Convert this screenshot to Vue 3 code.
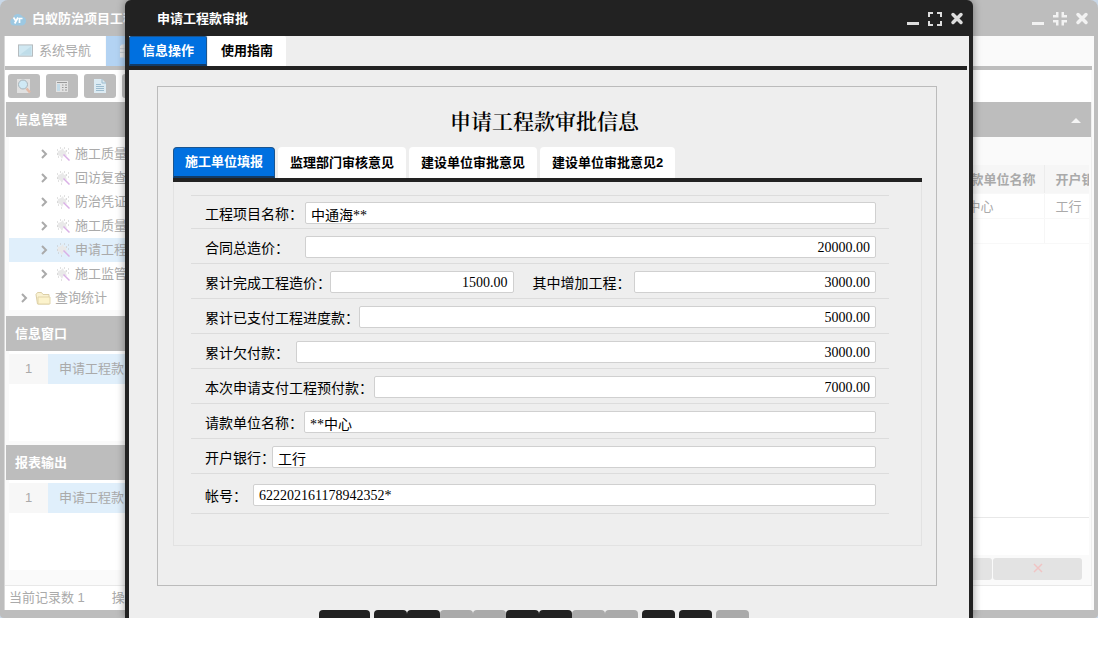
<script setup>
import { reactive } from 'vue'

const treeItems = [
  { text: '施工质量' },
  { text: '回访复查' },
  { text: '防治凭证' },
  { text: '施工质量' },
  { text: '申请工程', active: true },
  { text: '施工监管' }
]

const sidePanels = ['信息窗口', '报表输出']

const formTabs = ['施工单位填报', '监理部门审核意见', '建设单位审批意见', '建设单位审批意见2']

const rows = reactive([
  { h: 33, fields: [{ id: 'project', label: '工程项目名称：', lw: 100, value: '中通海**', grow: 1 }] },
  { h: 35, fields: [{ id: 'total', label: '合同总造价：', lw: 100, value: '20000.00', num: true, grow: 1 }] },
  {
    h: 35,
    fields: [
      { id: 'done', label: '累计完成工程造价：', lw: 125, value: '1500.00', num: true, grow: 184 },
      { id: 'added', label: '其中增加工程：', lw: 101, value: '3000.00', num: true, grow: 243 }
    ]
  },
  { h: 35, fields: [{ id: 'paid', label: '累计已支付工程进度款：', lw: 154, value: '5000.00', num: true, grow: 1 }] },
  { h: 35, fields: [{ id: 'owed', label: '累计欠付款：', lw: 91, value: '3000.00', num: true, grow: 1 }] },
  { h: 35, fields: [{ id: 'advance', label: '本次申请支付工程预付款：', lw: 169, value: '7000.00', num: true, grow: 1 }] },
  { h: 35, fields: [{ id: 'payee', label: '请款单位名称：', lw: 99, value: '**中心', grow: 1 }] },
  { h: 35, fields: [{ id: 'bank', label: '开户银行：', lw: 67, value: '工行', grow: 1 }] },
  { h: 41, fields: [{ id: 'account', label: '帐号：', lw: 48, value: '622202161178942352*', grow: 1 }] }
])

const footerGroups = [
  [{ name: '保存', wide: true }],
  [
    { name: '首条' }, { name: '上条' }, { name: '下条', off: true }, { name: '末条', off: true },
    { name: '新增' }, { name: '修改' }, { name: '删除', off: true }, { name: '撤销', off: true }
  ],
  [{ name: '打印' }],
  [{ name: '导出' }],
  [{ name: '关闭', off: true }]
]
</script>

<template>
  <div class="desktop" lang="zh-CN">
    <div class="window">
      <header class="titlebar">
        <svg class="logo" viewBox="0 0 16 14" aria-hidden="true">
          <path d="M4 13.500a3.700 3.700 0 0 1-.8-7.300A5 5 0 0 1 12.500 4.500a4.600 4.600 0 0 1-.3 9z" fill="#9cc8e2" />
          <path d="M3.500 5.500l2.200 3.300M8 5.500l-3.300 6M9.500 11V6.500h3" fill="none" stroke="#fff" stroke-width="1.700" />
        </svg>
        <span class="wtitle">白蚁防治项目工程</span>
        <div class="controls">
          <button type="button" aria-label="最小化"><svg viewBox="0 0 16 16"><path d="M2 11h12v3H2z" /></svg></button>
          <button type="button" aria-label="还原"><svg viewBox="0 0 16 16"><path d="M4 1h2.500v5.500H1V4h3zM9.500 1H12v3h3v2.500H9.500zM1 9h5.500v5.500H4v-3H1zM9.500 9H15v2.500h-3v3H9.500z" /></svg></button>
          <button type="button" aria-label="关闭"><svg viewBox="0 0 16 16"><path class="cross" d="M4 3.500l8 8M12 3.500l-8 8" /></svg></button>
        </div>
      </header>

      <div class="wbody">
        <nav class="wtabs">
          <button type="button" class="wtab">
            <svg class="screen" viewBox="0 0 16 14" aria-hidden="true">
              <rect x="0.500" y="0.500" width="15" height="12" fill="#d0e8f2" stroke="#b3b8bb" />
              <path d="M2 11L14 2v9z" fill="#bfdde9" />
            </svg>
            系统导航
          </button>
          <button type="button" class="wtab current" aria-label="申请工程款">
            <svg class="screen" viewBox="0 0 16 14" aria-hidden="true">
              <path d="M3 0h13v14H1V2z" fill="#e6e8ea" />
              <path d="M1 4.500h15M1 8.500h15M5.500 0v14M10.500 0v14" stroke="#c0c8ce" />
            </svg>
          </button>
        </nav>

        <div class="toolbar">
          <button type="button" aria-label="查询">
            <svg viewBox="0 0 16 16">
              <path d="M1 1h13v14H1z" fill="#e0e0e0" />
              <circle cx="7" cy="6.500" r="4.500" fill="#cfe9f5" stroke="#a9b4ba" />
              <path d="M10.500 10.500l3.500 4" stroke="#e2b9a6" stroke-width="2.500" />
            </svg>
          </button>
          <button type="button" aria-label="表单">
            <svg viewBox="0 0 16 16">
              <path d="M2 3h12v11H2z" fill="#e2e2e2" />
              <path d="M3 6h3v7H3z" fill="#c3dbe8" />
              <path d="M8 7h1.500M8 9.500h1.500M8 12h1.500M11 7h2M11 9.500h2M11 12h2M3 4.500h10" stroke="#999" />
            </svg>
          </button>
          <button type="button" aria-label="文档">
            <svg viewBox="0 0 16 16">
              <path d="M2 1h8l4 4v10H2z" fill="#dcebf3" />
              <path d="M10 1v4h4M4 6.500h5M4 8.500h8M4 10.500h8M4 12.500h8" fill="none" stroke="#9cbccf" />
            </svg>
          </button>
          <button type="button" aria-label="导出"></button>
        </div>

        <div class="columns">
          <aside class="side">
            <h2 class="bar">信息管理</h2>
            <ul class="tree">
              <li v-for="(item, i) in treeItems" :key="i" :class="{ active: item.active }">
                <svg class="chev" viewBox="0 0 8 10" aria-hidden="true"><path d="M2 1l4 4-4 4" /></svg>
                <svg class="wand" viewBox="0 0 14 14" aria-hidden="true">
                  <path d="M2 4l3-1 2-2 1 3 3-1-1 3 1 3-3-1-2 4-2-3-3-1z" fill="#e9e9e9" />
                  <path d="M1 3h1M4 1h1M12 2h1M1 7h1M2 10h1M5 13h1M8 1h1M10 4h1M12 6h1" stroke="#c4c4c4" />
                  <path d="M7.500 7.500l6 6" stroke="#d9b0e6" stroke-width="1.500" />
                </svg>
                <span>{{ item.text }}</span>
              </li>
              <li class="parent">
                <svg class="chev" viewBox="0 0 8 10" aria-hidden="true"><path d="M2 1l4 4-4 4" /></svg>
                <svg class="folder" viewBox="0 0 16 14" aria-hidden="true">
                  <path d="M1 3.500l1.500-2h4l1.500 2h6v9.500H2.500z" fill="#faf2d2" stroke="#dccfa6" />
                  <path d="M3 6h12v7H3z" fill="#fcf3cc" stroke="#e2d5aa" />
                </svg>
                <span>查询统计</span>
              </li>
            </ul>
            <section v-for="p in sidePanels" :key="p" class="panel">
              <h2 class="bar">{{ p }}</h2>
              <div class="list">
                <div class="listrow"><span class="no">1</span><span class="item">申请工程款</span></div>
              </div>
            </section>
          </aside>

          <main class="main">
            <div class="bar fold">
              <svg viewBox="0 0 12 6" aria-hidden="true"><path d="M1 6l5-5 5 5z" fill="#f4f4f4" /></svg>
            </div>
            <div class="grid">
              <table>
                <colgroup><col><col class="c-unit"><col class="c-bank"></colgroup>
                <thead><tr><th></th><th>请款单位名称</th><th>开户银行</th></tr></thead>
                <tbody>
                  <tr><td></td><td>**中心</td><td>工行</td></tr>
                  <tr><td></td><td></td><td></td></tr>
                </tbody>
              </table>
            </div>
            <div class="actions">
              <button type="button" aria-label="确定"></button>
              <button type="button" aria-label="取消">
                <svg viewBox="0 0 10 10"><path d="M1 1l8 8M9 1l-8 8" stroke="#f0c4c4" stroke-width="1.500" /></svg>
              </button>
            </div>
          </main>
        </div>

        <footer class="status"><span>当前记录数 1</span><span>操作员</span></footer>
      </div>
    </div>

    <section class="dialog" role="dialog" aria-label="申请工程款审批">
      <header class="titlebar dark">
        <h1 class="dtitle">申请工程款审批</h1>
        <div class="controls">
          <button type="button" aria-label="最小化"><svg viewBox="0 0 16 16"><path d="M2 11h12v3H2z" /></svg></button>
          <button type="button" aria-label="最大化"><svg viewBox="0 0 16 16"><path d="M1 1h5v2H3v3H1zM10 1h5v5h-2V3h-3zM1 10h2v3h3v2H1zM13 10h2v5h-5v-2h3z" /></svg></button>
          <button type="button" aria-label="关闭"><svg viewBox="0 0 16 16"><path class="cross" d="M4 3.500l8 8M12 3.500l-8 8" /></svg></button>
        </div>
      </header>

      <div class="dbody">
        <nav class="tabs top">
          <button type="button" class="tab on">信息操作</button>
          <button type="button" class="tab">使用指南</button>
        </nav>

        <form class="sheet" @submit.prevent>
          <h2 class="heading">申请工程款审批信息</h2>
          <nav class="tabs">
            <button v-for="(t, i) in formTabs" :key="t" type="button" class="tab" :class="{ on: i === 0 }">{{ t }}</button>
          </nav>
          <div class="fields">
            <div v-for="(row, i) in rows" :key="i" class="frow" :style="{ minHeight: row.h + 'px' }">
              <div v-for="f in row.fields" :key="f.id" class="field" :style="{ flexGrow: f.grow, flexBasis: f.lw + 'px' }">
                <label :for="f.id" :style="{ width: f.lw + 'px' }">{{ f.label }}</label>
                <input :id="f.id" v-model="f.value" type="text" :class="{ num: f.num }">
              </div>
            </div>
          </div>
        </form>

        <div class="footbar">
          <div v-for="(g, i) in footerGroups" :key="i" class="group">
            <button v-for="b in g" :key="b.name" type="button" :aria-label="b.name" :class="{ wide: b.wide, off: b.off }"></button>
          </div>
        </div>
      </div>
    </section>
  </div>
</template>

<style>
body {
  background: #fff;
}
</style>

<style scoped>
.desktop,
.desktop * {
  box-sizing: border-box;
}

.desktop {
  position: relative;
  overflow: hidden;
  margin-right: 1px;
  background: #c9d8e8;
  font: 13px/20px "Liberation Sans", "Noto Sans CJK SC", sans-serif;
  color: #aaa;
}

button {
  margin: 0;
  padding: 0;
  border: 0;
  font: inherit;
  color: inherit;
  background: none;
}

h1,
h2,
ul {
  margin: 0;
  padding: 0;
  font-size: 13px;
}

.window {
  background: #bdbdbd;
  border-radius: 8px 8px 4px 4px;
  padding: 0 4px 4px;
}

.titlebar {
  display: flex;
  align-items: center;
  height: 36px;
  padding: 2px 4px 0 6px;
  color: #fff;
}

.logo {
  width: 16px;
  height: 14px;
  margin-right: 6px;
}

.wtitle {
  font-weight: bold;
}

.controls {
  display: flex;
  gap: 6px;
  margin-left: auto;
}

.controls button {
  width: 16px;
  height: 16px;
}

.controls svg {
  display: block;
  width: 16px;
  height: 16px;
  fill: #f2f2f2;
}

.cross {
  stroke: #f2f2f2;
  stroke-width: 3.500;
  stroke-linecap: round;
}

.wbody {
  border-left: 1px solid #d8d8d8;
  background: #fafafa;
}

.wtabs {
  display: flex;
  height: 34px;
  gap: 1px;
  margin-right: 2px;
  border-bottom: 4px solid #bdbdbd;
}

.wtab {
  display: flex;
  align-items: center;
  gap: 6px;
  width: 100px;
  height: 30px;
  padding-left: 13px;
  background: #fff;
  white-space: nowrap;
}

.wtab.current {
  width: 140px;
  background: #b3d3f3;
  color: #fff;
}

.screen {
  flex: none;
  width: 15px;
  height: 14px;
}

.toolbar {
  display: flex;
  gap: 6px;
  height: 32px;
  margin-right: 3px;
  padding: 4px 3px;
  background: #fff;
}

.toolbar button {
  display: flex;
  align-items: center;
  justify-content: center;
  width: 32px;
  height: 24px;
  border-radius: 3px;
  background: #bdbdbd;
}

.toolbar svg {
  width: 16px;
  height: 16px;
}

.columns {
  display: flex;
  margin-right: 2px;
  border-bottom: 1px solid #e8e8e8;
}

.side {
  width: 240px;
  padding-left: 1px;
}

.bar {
  height: 35px;
  padding: 0 9px;
  line-height: 35px;
  font-weight: bold;
  color: #fff;
  background: #bdbdbd;
}

.tree {
  margin: 0 0 6px 3px;
  padding-top: 5px;
  list-style: none;
  background: #fff;
}

.tree li {
  display: flex;
  align-items: center;
  height: 24px;
  padding-left: 31px;
}

.tree li.parent {
  padding-left: 11px;
}

.tree li.active {
  background: #e0effb;
}

.chev {
  width: 8px;
  height: 10px;
  margin-right: 8px;
  fill: none;
  stroke: #aaa;
  stroke-width: 2;
}

.parent .chev {
  margin-right: 7px;
}

.wand {
  width: 14px;
  height: 14px;
  margin-right: 5px;
}

.folder {
  width: 16px;
  height: 14px;
  margin-right: 4px;
}

.list {
  height: 90px;
  margin: 0 0 4px 3px;
  padding-top: 3px;
  background: #fff;
}

.panel:last-child {
  margin-bottom: 15px;
}

.panel:last-child .list {
  margin-bottom: 0;
}

.listrow {
  display: flex;
  height: 30px;
  line-height: 30px;
}

.no {
  width: 39px;
  text-align: center;
  background: #f7f7f7;
}

.item {
  flex: 1;
  padding-left: 11px;
  background: #e0effb;
}

.main {
  display: flex;
  flex: 1;
  flex-direction: column;
  min-width: 0;
  border-right: 1px solid #eee;
}

.fold {
  display: flex;
  align-items: center;
  justify-content: flex-end;
}

.fold svg {
  width: 12px;
  height: 6px;
}

.grid {
  flex: 1;
  margin: 28px 2px 0 0;
  background: linear-gradient(#e8e8e8, #e8e8e8) 0 calc(100% - 37px) / 100% 1px no-repeat #fff;
}

table {
  width: 100%;
  table-layout: fixed;
  border-collapse: collapse;
}

.c-unit {
  width: 98px;
}

.c-bank {
  width: 45px;
}

th,
td {
  height: 25px;
  padding: 2px 9px 0 11px;
  overflow: hidden;
  border-right: 1px solid #f6f6f6;
  border-bottom: 1px solid #f8f8f8;
  line-height: 20px;
  text-align: left;
  white-space: nowrap;
}

th {
  height: 28px;
  border-right-color: #ececec;
  background: #f6f6f6;
}

th:last-child,
td:last-child {
  padding-right: 0;
  border-right: 0;
}

.actions {
  display: flex;
  justify-content: flex-end;
  gap: 1px;
  padding: 3px 9px 5px;
}

.actions button {
  width: 89px;
  height: 22px;
  border-radius: 3px;
  background: #e3e3e3;
}

.actions svg {
  width: 10px;
  height: 10px;
}

.status {
  display: flex;
  gap: 27px;
  height: 24px;
  margin: 0 3px 4px 0;
  padding-left: 4px;
  line-height: 24px;
  background: #fff;
}

.dialog {
  position: absolute;
  top: 0;
  right: 125px;
  bottom: 0;
  left: 125px;
  padding: 0 4px;
  border-radius: 6px 6px 0 0;
  background: #222;
  box-shadow: 0 0 8px rgba(0, 0, 0, 0.4);
  color: #000;
}

.dtitle {
  margin-left: 22px;
}

.dialog .controls svg {
  fill: #ddd;
}

.dialog .cross {
  stroke: #ddd;
}

.dbody {
  height: calc(100% - 36px);
  overflow: hidden;
  background: #eee;
}

.tabs {
  display: flex;
  gap: 3px;
  height: 35px;
  border-bottom: 4px solid #222;
}

.tabs.top {
  gap: 1px;
  height: 34px;
  margin-right: 2px;
}

.tab {
  height: 31px;
  padding: 0 12px;
  border-radius: 4px 4px 0 0;
  background: #fff;
  font-weight: bold;
  white-space: nowrap;
}

.top .tab {
  height: 30px;
  padding: 0 13px;
  border-radius: 2px 2px 0 0;
}

.tab.on {
  color: #fff;
  background: #0070e0;
  border: 1px solid #1a5590;
  border-bottom: 2px solid #123c68;
  padding: 0 11px;
}

.top .tab.on {
  padding: 0 12px;
}

.sheet {
  margin: 16px 32px 0 28px;
  padding: 17px 14px 39px 15px;
  border: 1px solid #bbb;
}

.heading {
  height: 43px;
  padding-right: 6px;
  font: 600 21px/32px "Noto Serif CJK SC", "Noto Sans CJK SC", serif;
  text-align: center;
}

.fields {
  padding: 13px 32px 31px 17px;
  border: 1px solid #e2e2e2;
  border-top: 0;
}

.frow {
  display: flex;
  align-items: center;
  gap: 19px;
  padding: 2px 13px 0 14px;
  border-top: 1px solid #dcdcdc;
}

.frow:last-child {
  border-bottom: 1px solid #dcdcdc;
}

.field {
  display: flex;
  align-items: center;
  min-width: 0;
}

.field label {
  flex: none;
  font: 14px/22px "Noto Sans CJK SC", sans-serif;
  white-space: nowrap;
}

.field input {
  flex: 1;
  min-width: 0;
  width: 0;
  height: 22px;
  padding: 2px 5px 0;
  border: 1px solid #d0d0d0;
  border-radius: 2px;
  outline: 0;
  background: #fff;
  color: #000;
  font: 14px/18px "Liberation Serif", "Noto Sans CJK SC", serif;
}

.field input.num {
  text-align: right;
}

.footbar {
  display: flex;
  justify-content: center;
  gap: 4px;
  margin: 24px 59px 0 28px;
}

.group {
  display: flex;
}

.group button {
  width: 33px;
  height: 30px;
  border-radius: 4px 4px 0 0;
  background: #222;
}

.group button.wide {
  width: 51px;
}

.group button.off {
  background: #aaa;
}
</style>
